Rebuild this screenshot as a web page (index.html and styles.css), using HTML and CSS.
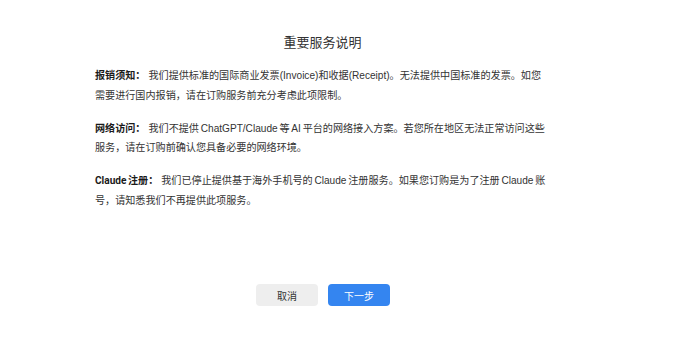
FILE: index.html
```html
<!DOCTYPE html>
<html>
<head>
    <meta charset="utf-8">
    <title> 重要服务说明 </title>

    <!-- Styling -->
    <link rel="stylesheet" href="styles.css">
</head>
<body>
    <div class="notice">
        <h1 class="notice_title">重要服务说明</h1>

        <p class="notice_item"><b class="notice_label">报销须知：</b>我们提供标准的国际商业发票(Invoice)和收据(Receipt)。无法提供中国标准的发票。如您需要进行国内报销，请在订购服务前充分考虑此项限制。</p>

        <p class="notice_item"><b class="notice_label">网络访问：</b>我们不提供 ChatGPT/Claude 等 AI 平台的网络接入方案。若您所在地区无法正常访问这些服务，请在订购前确认您具备必要的网络环境。</p>

        <p class="notice_item"><b class="notice_label">Claude 注册：</b>我们已停止提供基于海外手机号的 Claude 注册服务。如果您订购是为了注册 Claude 账号，请知悉我们不再提供此项服务。</p>

        <div class="notice_actions">
            <button class="btn btn_cancel">取消</button>
            <button class="btn btn_next">下一步</button>
        </div>
    </div>
</body>
</html>
```

FILE: styles.css
```css
:root {
    --ink:        #333333;
    --ink-strong: #1a1a1a;
    --grey-btn:   #eeeeee;
    --blue:       #3485f0;
}

* {
    font-family: "Liberation Sans", "Noto Sans CJK SC", sans-serif;
}

body {
    margin: 0;
    background-color: #ffffff;
    color: var( --ink );
}

.notice {
    width: 451px;
    margin-left: 95px;
    padding-top: 34px;
}

.notice_title {
    margin: 0 0 14px 0;
    padding-left: 4px;

    font-size: 13px;
    font-weight: normal;
    line-height: 18px;
    text-align: center;
}

.notice_item {
    margin: 0 0 13.5px 0;

    font-size: 10.1px;
    line-height: 19.5px;
    word-spacing: -1px;
}

.notice_label {
    margin-right: 3px;

    font-family: Roboto, "Noto Sans CJK SC", sans-serif;
    color: var( --ink-strong );
    font-weight: bold;
}

.notice_actions {
    display: flex;
    justify-content: center;
    gap: 10px;

    margin-top: 74px;
    margin-left: 5px;
}

.btn {
    width: 62px;
    height: 22px;
    padding: 0;

    font-size: 10px;
    border: none;
    border-radius: 4px;
}

.btn_cancel {
    color: var( --ink );
    background-color: var( --grey-btn );
}

.btn_next {
    color: #ffffff;
    background-color: var( --blue );
}
```
